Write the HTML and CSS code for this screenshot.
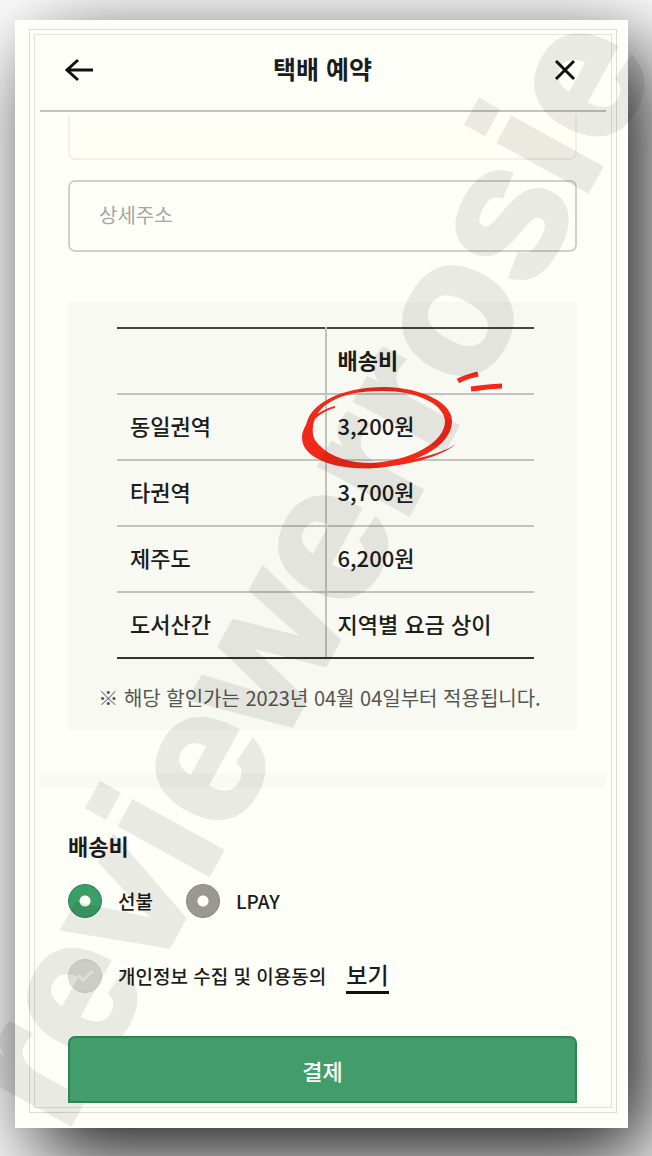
FILE: index.html
```html
<!DOCTYPE html>
<html lang="ko">
<head>
<meta charset="UTF-8">
<meta name="viewport" content="width=device-width, initial-scale=1">
<title>택배 예약</title>
<link rel="stylesheet" href="styles.css">
</head>
<body>

<div class="paper">
  <div class="frame">
    <div class="frame-inner">

      <header class="topbar">
        <button class="icon-btn" type="button" aria-label="뒤로">
          <svg width="30" height="24" viewBox="0 0 30 24"><path d="M29 12H3M14 2L3 12L14 22"/></svg>
        </button>
        <h1>택배 예약</h1>
        <button class="icon-btn" type="button" aria-label="닫기">
          <svg width="24" height="24" viewBox="0 0 24 24"><path d="M3 3L21 21M21 3L3 21"/></svg>
        </button>
      </header>

      <form class="content">
        <input class="field field-cut" type="text" aria-label="주소" readonly>
        <input class="field" type="text" aria-label="상세주소" placeholder="상세주소">

        <section class="fees">
          <table>
            <thead>
              <tr><td></td><th scope="col">배송비</th></tr>
            </thead>
            <tbody>
              <tr>
                <th scope="row">동일권역</th>
                <td class="marked">3,200원
                  <svg class="scribble" width="210" height="100" viewBox="298 370 210 100">
                    <path class="fill" d="M305 426C307 403 340 386 383 386C424 387 452 403 451 421C450 445 416 463 373 467C340 469 313 458 306 438C305 434 305 430 305 426ZM312 426C311 434 313 439 318 444C330 456 348 462 371 462C412 459 444 441 444 420C443 403 416 390 382 390C342 389 314 403 312 426Z"/>
                    <path class="fill" d="M334 405C312 411 297 427 302 443C309 461 341 469 374 467C407 464 438 457 455 443C440 453 409 461 374 463C346 465 318 457 308 441C302 427 315 412 334 407Z"/>
                    <path d="M457 380C464 376 470 375 477 373" stroke-width="5"/>
                    <path d="M470 388C482 387 489 385 501 385" stroke-width="5"/>
                  </svg>
                </td>
              </tr>
              <tr><th scope="row">타권역</th><td>3,700원</td></tr>
              <tr><th scope="row">제주도</th><td>6,200원</td></tr>
              <tr><th scope="row">도서산간</th><td>지역별 요금 상이</td></tr>
            </tbody>
          </table>
          <p>※ 해당 할인가는 2023년 04월 04일부터 적용됩니다.</p>
        </section>

        <div class="band"></div>

        <h2 id="pay-title">배송비</h2>
        <div class="options" role="radiogroup" aria-labelledby="pay-title">
          <label><input type="radio" name="pay" checked>선불</label>
          <label><input type="radio" name="pay">LPAY</label>
        </div>
        <div class="agree">
          <label>
            <span class="check">
              <input type="checkbox">
              <svg width="34" height="34" viewBox="0 0 34 34"><path d="M10 16L15 21L25 12"/></svg>
            </span>개인정보 수집 및 이용동의
          </label>
          <a href="#terms">보기</a>
        </div>

        <button class="submit" type="submit">결제</button>
      </form>

    </div>
  </div>
</div>

<svg class="watermark" aria-hidden="true">
  <text transform="translate(64 1135) rotate(-61)">reviewerrosie</text>
</svg>

</body>
</html>
```
FILE: styles.css
```css
* { box-sizing: border-box; }
body {
  position: relative;
  margin: 0;
  padding: 20px 24px 28px 15px;
  overflow: hidden;
  background-color: #fff;
  color: #1c1c1a;
  font-family: "Noto Sans CJK KR", sans-serif;
  font-weight: 500;
}
.paper {
  padding: 9px 11px 15px 14px;
  background-color: #fffffa;
  box-shadow: 20px 28px 82px rgba(0,0,0,0.92);
}
.frame {
  padding: 4px;
  border: 1px solid #dcddd6;
}
.frame-inner {
  padding: 0 5px 4px;
  border: 1px solid #e2e3dc;
}

/* top bar */
.topbar {
  display: flex;
  justify-content: space-between;
  align-items: center;
  height: 77px;
  padding: 0 29px 6px 24px;
  border-bottom: 2px solid #c2c3bd;
}
.topbar h1 {
  margin: 0;
  padding: 0 2px 4px 0;
  font-size: 25px;
  line-height: 36px;
}
.icon-btn {
  display: flex;
  padding: 0;
  border: none;
  background: none;
  cursor: pointer;
}
.icon-btn svg {
  fill: none;
  stroke: #111;
  stroke-width: 3;
}

/* address fields */
.content { padding: 3px 29px 0 28px; }
.field {
  display: block;
  width: 100%;
  height: 72px;
  padding: 0 30px 4px 29px;
  border: 2px solid #d0d1cc;
  border-radius: 7px;
  background-color: transparent;
  font: inherit;
  font-weight: 400;
  font-size: 20px;
}
.field::placeholder { color: #a5a69f; opacity: 1; }
.field-cut {
  height: 45px;
  margin-bottom: 20px;
  border-color: #f1f1ea;
  border-top: none;
  border-radius: 0 0 7px 7px;
  background-color: #fffff6;
}

/* fee table */
.fees {
  margin-top: 50px;
  padding: 25px 28px 16px;
  background-color: #f8f9f2;
}
table {
  width: calc(100% - 36px);
  margin: 0 15px 0 21px;
  border-collapse: collapse;
  border-top: 2px solid #444642;
  border-bottom: 2px solid #33342f;
  table-layout: fixed;
  font-size: 22px;
}
th, td {
  height: 66px;
  padding: 0 11px 4px;
  border-bottom: 2px solid #c1c3bc;
  text-align: left;
  font-weight: 500;
}
tr > :first-child {
  padding-left: 13px;
  border-right: 2px solid #c1c3bc;
}
thead th { font-weight: 700; }
tbody tr:last-child > * { border-bottom-color: #33342f; }
.marked { position: relative; }
.scribble {
  position: absolute;
  left: -28px;
  top: -24px;
  fill: none;
  stroke: #f22819;
}
.scribble .fill {
  fill: #f22819;
  fill-rule: evenodd;
  stroke: none;
}
.fees p {
  display: flex;
  justify-content: center;
  margin: 23px 6px 0 0;
  white-space: nowrap;
  color: #555651;
  font-weight: 400;
  font-size: 20px;
  line-height: 32px;
}

.band {
  height: 15px;
  margin: 43px -29px 0 -28px;
  background-color: #f9faf4;
}

/* payment */
h2 {
  margin: 41px 0 23px;
  font-size: 22px;
  line-height: 32px;
}
.options, .agree {
  display: flex;
  align-items: center;
  font-size: 19px;
}
.options { gap: 33px; }
.agree { gap: 20px; margin-top: 39px; }
label {
  display: flex;
  align-items: center;
  gap: 16px;
  line-height: 34px;
}
input[type="radio"], input[type="checkbox"] {
  appearance: none;
  width: 34px;
  height: 34px;
  margin: 0;
  border-radius: 50%;
}
input[type="radio"] {
  border: 1px solid #85857c;
  background: radial-gradient(circle, #fffffa 5px, #999990 6px);
}
input[type="radio"]:checked {
  border-color: #238350;
  background: radial-gradient(circle, #fffffa 5px, #3b9e67 6px);
}
input[type="checkbox"] {
  display: block;
  border: 1px solid #d2d2ca;
  background-color: #e0e0d9;
}
.check { position: relative; }
.check svg {
  position: absolute;
  left: 0;
  top: 0;
  fill: none;
  stroke: #f4f4ee;
  stroke-width: 3;
}
.agree a {
  border-bottom: 3px solid #111;
  color: inherit;
  font-size: 23px;
  line-height: 34px;
  text-decoration: none;
}
.submit {
  position: relative;
  z-index: 2;
  display: block;
  width: 100%;
  height: 67px;
  margin-top: 42px;
  border: 2px solid #2d8552;
  border-radius: 7px 7px 0 0;
  background-color: #419d69;
  color: #fffffa;
  font: inherit;
  font-size: 22px;
  cursor: pointer;
}

/* diagonal stamp over the page */
.watermark {
  position: absolute;
  left: 0;
  top: 0;
  width: 100%;
  height: 100%;
  fill: #000;
  stroke: #000;
  stroke-width: 5px;
  opacity: 0.08;
  font-family: "Liberation Sans", sans-serif;
  font-size: 190px;
  font-weight: 700;
  pointer-events: none;
}
```
